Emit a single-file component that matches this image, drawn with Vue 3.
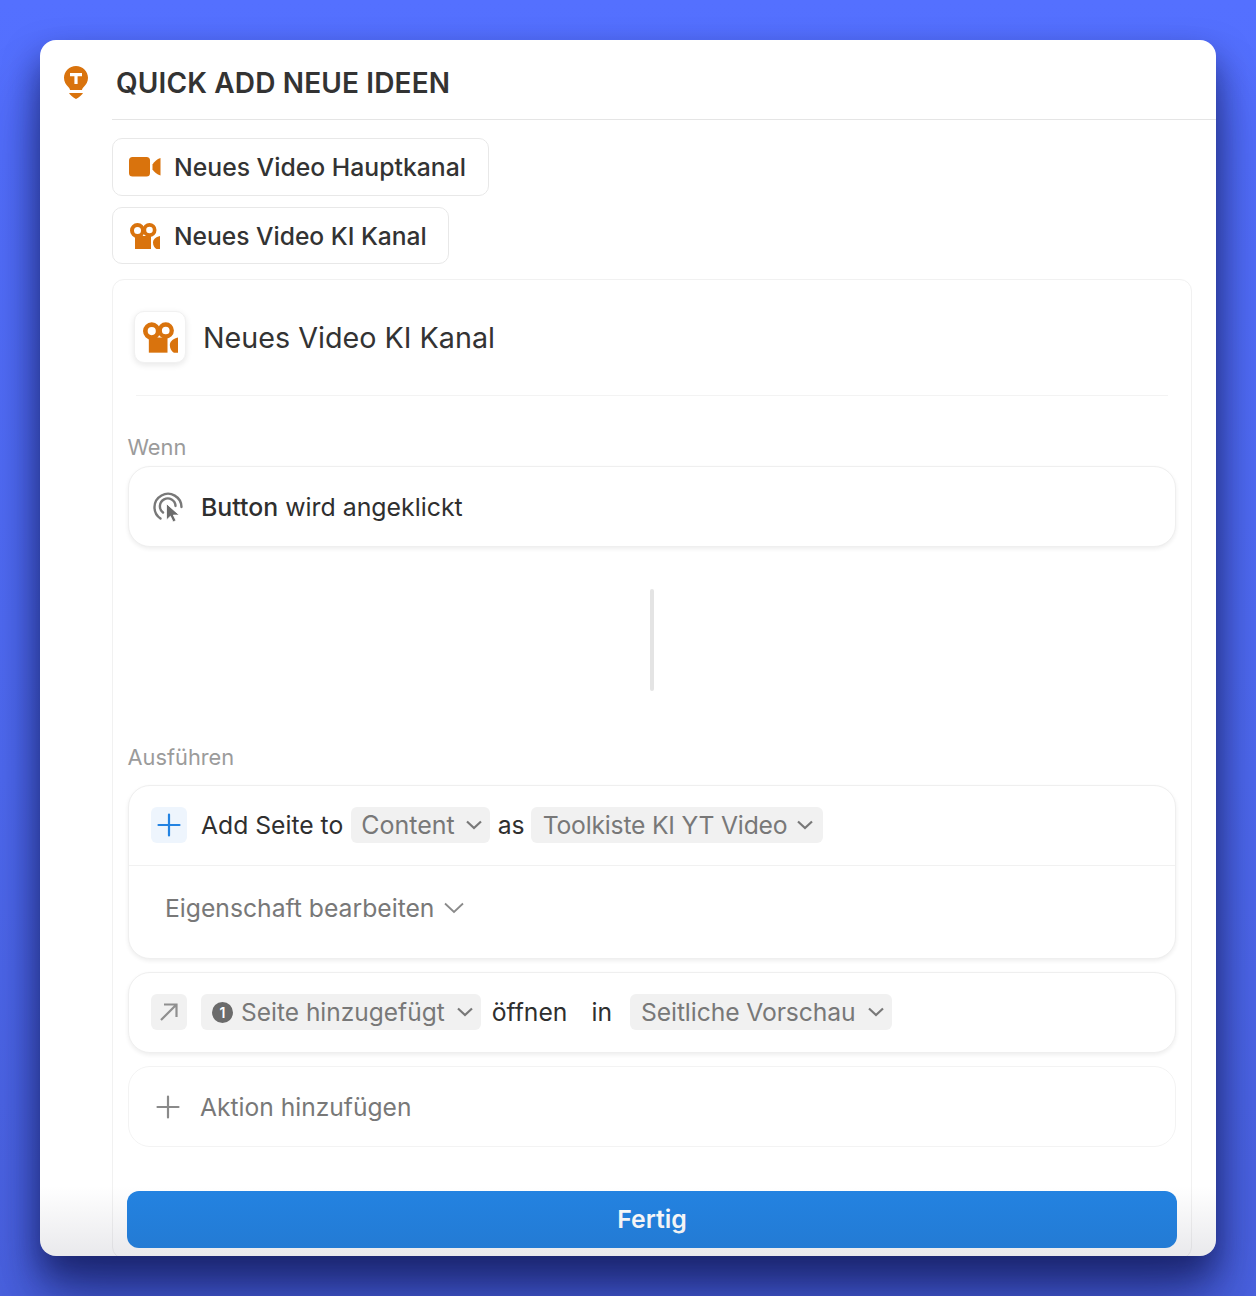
<template>
  <div class="page">
    <div class="window">
      <header class="head">
        <svg class="bulb" viewBox="0 0 24 33" width="24" height="33">
          <path d="M12 0C5.4 0 0 5.2 0 11.8c0 3.9 1.8 6.8 4.3 9.2 1.100 1.100 1.500 2 1.700 3h12c.2-1 .6-1.900 1.700-3 2.500-2.400 4.300-5.300 4.300-9.200C24 5.200 18.600 0 12 0Z" fill="#d9730d" />
          <path d="M5.500 27h13c.3 0 .5.300.3.600-1.200 1.200-3.800 4.400-6.800 5.400-3-1-5.600-4.200-6.800-5.400-.2-.3 0-.6.5-.6Z" fill="#d9730d" />
          <path d="M6 7h12v3.200h-4.400V18h-3.200v-7.800H6Z" fill="#fff" />
        </svg>
        <h1>QUICK ADD NEUE IDEEN</h1>
      </header>

      <main class="content">
        <div class="quick-list">
          <button class="quick-btn tall">
            <svg viewBox="0 0 32 20" width="32" height="20">
              <rect x="0" y="0" width="21" height="19.500" rx="3.500" fill="#d9730d" />
              <path d="M31.500 1v17.500c-3.500-1-6.500-3.500-8-6v-5c1.500-2.500 4.500-5.500 8-6.500Z" fill="#d9730d" />
            </svg>
            Neues Video Hauptkanal
          </button>
          <button class="quick-btn">
            <svg viewBox="0 0 30 26" width="30" height="26">
              <path fill-rule="evenodd" d="M7.500 0a7.500 7.500 0 1 1 0 15 7.500 7.500 0 0 1 0-15Zm0 4a3.500 3.500 0 1 0 0 7 3.500 3.500 0 0 0 0-7Z" fill="#d9730d" />
              <path fill-rule="evenodd" d="M19.500 0a7 7 0 1 1 0 14 7 7 0 0 1 0-14Zm0 3.700a3.300 3.300 0 1 0 0 6.600 3.300 3.300 0 0 0 0-6.600Z" fill="#d9730d" />
              <rect x="5" y="13" width="16" height="13" fill="#d9730d" />
              <path d="M30 13v13h-3.500C24.500 25 23 22.500 23 19.500s2.500-5.500 7-6.500Z" fill="#d9730d" />
            </svg>
            Neues Video KI Kanal
          </button>
        </div>

        <section class="card">
          <div class="card-title">
            <span class="title-icon">
              <svg viewBox="0 0 30 26" width="35" height="31">
                <path fill-rule="evenodd" d="M7.500 0a7.500 7.500 0 1 1 0 15 7.500 7.500 0 0 1 0-15Zm0 4a3.500 3.500 0 1 0 0 7 3.500 3.500 0 0 0 0-7Z" fill="#d9730d" />
                <path fill-rule="evenodd" d="M19.500 0a7 7 0 1 1 0 14 7 7 0 0 1 0-14Zm0 3.700a3.300 3.300 0 1 0 0 6.600 3.300 3.300 0 0 0 0-6.600Z" fill="#d9730d" />
                <rect x="5" y="13" width="16" height="13" fill="#d9730d" />
                <path d="M30 13v13h-3.500C24.500 25 23 22.500 23 19.500s2.500-5.500 7-6.500Z" fill="#d9730d" />
              </svg>
            </span>
            <span class="title-text">Neues Video KI Kanal</span>
          </div>

          <div class="label wenn">Wenn</div>
          <div class="box row trigger">
            <svg class="row-icon" viewBox="0 0 30 30" width="30" height="30" fill="none" stroke="#787878" stroke-width="2.400" stroke-linecap="round">
              <path d="M7.500 26.500A13.500 13.500 0 1 1 28.500 15" />
              <path d="M10 20.500A7.800 7.800 0 1 1 22.500 14" />
              <path d="M13.500 12V28l3.900-3.800 2.700 5.700 2.900-1.300-2.700-5.500h5.700Z" fill="#6b6b6b" stroke="#fff" stroke-width="0.800" stroke-linejoin="round" />
            </svg>
            <span class="strong">Button</span> <span>wird angeklickt</span>
          </div>

          <div class="connector"><span></span></div>

          <div class="label run">Ausführen</div>
          <div class="box action">
            <div class="row top">
              <span class="square blue">
                <svg viewBox="0 0 24 24" width="24" height="24" fill="none" stroke="#2383e2" stroke-width="2.200" stroke-linecap="round">
                  <path d="M12 1.500v21M1.500 12h21" />
                </svg>
              </span>
              <span class="txt">Add Seite to</span>
              <span class="pill content-pill">Content
                <svg viewBox="0 0 16 10" width="16" height="10" fill="none" stroke="#787878" stroke-width="2.200"><path d="M1 1.500 8 8l7-6.500" /></svg>
              </span>
              <span class="txt as">as</span>
              <span class="pill tight">Toolkiste KI YT Video
                <svg viewBox="0 0 16 10" width="16" height="10" fill="none" stroke="#787878" stroke-width="2.200"><path d="M1 1.500 8 8l7-6.500" /></svg>
              </span>
            </div>
            <div class="edit">
              Eigenschaft bearbeiten
              <svg viewBox="0 0 20 12" width="20" height="12" fill="none" stroke="#8a8a8a" stroke-width="1.800"><path d="M1 1.500 10 10l9-8.500" /></svg>
            </div>
          </div>

          <div class="box row open">
            <span class="square gray">
              <svg viewBox="0 0 20 20" width="20" height="20" fill="none" stroke="#8f8f8f" stroke-width="2.200">
                <path d="M2 18 17.500 2.500M5 2.500h12.500V15" />
              </svg>
            </span>
            <span class="pill first">
              <span class="num">1</span>Seite hinzugefügt
              <svg viewBox="0 0 16 10" width="16" height="10" fill="none" stroke="#787878" stroke-width="2.200"><path d="M1 1.500 8 8l7-6.500" /></svg>
            </span>
            <span class="txt">öffnen</span>
            <span class="txt in">in</span>
            <span class="pill preview">Seitliche Vorschau
              <svg viewBox="0 0 16 10" width="16" height="10" fill="none" stroke="#787878" stroke-width="2.200"><path d="M1 1.500 8 8l7-6.500" /></svg>
            </span>
          </div>

          <div class="box row add">
            <svg class="plus" viewBox="0 0 24 24" width="24" height="24" fill="none" stroke="#8a8a8a" stroke-width="2.200" stroke-linecap="round">
              <path d="M12 1.500v21M1.500 12h21" />
            </svg>
            Aktion hinzufügen
          </div>

          <button class="done">Fertig</button>
        </section>
      </main>
      <div class="fade"></div>
    </div>
  </div>
</template>

<script setup>
</script>

<style>
body {
  background: #4f69ee;
}
</style>

<style scoped>
.page {
  box-sizing: border-box;
  height: 1296px;
  padding: 40px;
  overflow: hidden;
  background: linear-gradient(180deg, #5470ff 0%, #4f6af0 60%, #4a62e0 100%);
  font-family: Inter, "Liberation Sans", sans-serif;
}

.window {
  position: relative;
  height: 1216px;
  overflow: hidden;
  background: #fff;
  border-radius: 16px;
  box-shadow: 0 18px 34px rgba(10, 15, 70, 0.6), 0 50px 60px rgba(10, 15, 70, 0.4);
}

.head {
  display: flex;
  align-items: center;
  height: 79px;
  box-sizing: border-box;
  padding: 0 0 0 24px;
}

.bulb {
  flex: none;
  margin: 6px 28px 0 0;
}

.head h1 {
  margin: 7px 0 0;
  font-size: 28px;
  font-weight: 600;
  color: #333;
  letter-spacing: 0.15px;
}

.content {
  margin-left: 72px;
  padding-right: 24px;
}

.content::before {
  content: "";
  display: block;
  height: 1px;
  margin-right: -24px;
  background: #e5e5e5;
}

.quick-list {
  display: flex;
  flex-direction: column;
  align-items: flex-start;
  gap: 11px;
  padding-top: 18px;
}

.quick-btn {
  display: flex;
  align-items: center;
  gap: 14px;
  height: 57px;
  padding: 0 21px 0 17px;
  background: #fff;
  border: 1px solid #e8e8e8;
  border-radius: 10px;
  font: 450 24.6px Inter, "Liberation Sans", sans-serif;
  color: #333;
}

.quick-btn.tall {
  height: 58px;
  gap: 13px;
  padding: 0 22px 0 16px;
  font-size: 24.75px;
}

.card {
  margin-top: 15px;
  height: 980px;
  box-sizing: border-box;
  border: 1px solid #f1f1f1;
  border-radius: 12px;
  padding: 0 15px;
}

.card-title {
  display: flex;
  align-items: center;
  gap: 17px;
  margin: 0 8px;
  padding: 31px 0 32px;
  border-bottom: 1px solid #f3f3f3;
}

.title-icon {
  display: flex;
  align-items: center;
  justify-content: center;
  box-sizing: border-box;
  width: 52px;
  height: 52px;
  margin-left: -2px;
  border: 1px solid #f1f1f1;
  border-radius: 10px;
  background: #fff;
  box-shadow: 0 2px 6px rgba(15, 15, 15, 0.1);
}

.title-text {
  font-size: 28.7px;
  color: #333;
}

.label {
  font-size: 21.8px;
  line-height: 28px;
  color: #9b9b9b;
  margin: 0 0 5px -0.5px;
}

.wenn {
  margin-top: 37px;
}

.run {
  margin-top: -1px;
  margin-bottom: 14px;
}

.box {
  box-sizing: border-box;
  border: 1px solid #efefef;
  border-radius: 22px;
  background: #fff;
  box-shadow: 0 2px 4px rgba(15, 15, 15, 0.07);
  font-size: 24.7px;
  color: #2f2f2f;
}

.row {
  display: flex;
  align-items: center;
  box-sizing: border-box;
  height: 81px;
}

.trigger {
  font-size: 24.85px;
}

.row-icon {
  margin: 0 18px 0 24px;
}

.strong {
  font-weight: 500;
  margin-right: 7px;
}

.connector {
  display: flex;
  justify-content: center;
  padding: 42px 0 53px;
}

.connector span {
  width: 4px;
  height: 102px;
  border-radius: 2px;
  background: #e4e4e4;
}

.action {
  height: 174px;
}

.top {
  height: 80px;
  border-bottom: 1px solid #f1f1f1;
  padding: 0 0 1px 22px;
}

.square {
  display: flex;
  align-items: center;
  justify-content: center;
  flex: none;
  width: 36px;
  height: 36px;
  border-radius: 6px;
  margin-right: 14px;
}

.blue {
  background: #eef5fd;
}

.gray {
  background: #f1f1f1;
}

.txt {
  margin-right: 7px;
}

.top .txt {
  margin-right: 8px;
}

.top .as {
  margin-right: 6px;
}

.pill {
  display: inline-flex;
  align-items: center;
  gap: 10px;
  height: 36px;
  padding: 0 8px 0 11px;
  border-radius: 6px;
  background: #f1f1f1;
  color: #787878;
  margin-right: 7px;
}

.content-pill {
  font-size: 25px;
  gap: 11px;
  padding: 0 8px 0 10px;
  margin-right: 8px;
}

.tight {
  letter-spacing: -0.2px;
  padding: 0 10px 0 12px;
}

.edit {
  display: flex;
  align-items: center;
  gap: 10px;
  height: 84px;
  padding-left: 36px;
  color: #787878;
}

.open {
  margin-top: 13px;
  padding: 0 0 1px 22px;
}

.open .first {
  gap: 0;
  padding-left: 11px;
  margin-right: 11px;
  font-size: 24.5px;
}

.open .first svg {
  margin-left: 12px;
}

.preview {
  letter-spacing: -0.1px;
  gap: 12px;
}

.num {
  display: inline-flex;
  align-items: center;
  justify-content: center;
  width: 21px;
  height: 21px;
  margin-right: 8px;
  border-radius: 50%;
  background: #6b6b6b;
  color: #fff;
  font-size: 14px;
  font-weight: 600;
}

.in {
  margin-left: 17px;
  margin-right: 18px;
}

.add {
  margin-top: 13px;
  font-size: 24.6px;
  color: #787878;
  box-shadow: none;
  border-color: #f3f3f3;
}

.plus {
  margin: 0 20px 0 27px;
}

.done {
  display: block;
  width: calc(100% + 2px);
  height: 57px;
  margin: 44px 0 0 -1px;
  padding: 0 0 2px;
  border: none;
  border-radius: 12px;
  background: #2383e2;
  color: #fff;
  font: 600 24.8px Inter, "Liberation Sans", sans-serif;
}

.fade {
  position: absolute;
  left: 0;
  right: 0;
  bottom: 0;
  height: 70px;
  pointer-events: none;
  background: linear-gradient(180deg, rgba(40, 40, 70, 0) 0%, rgba(40, 40, 70, 0.1) 100%);
}
</style>
